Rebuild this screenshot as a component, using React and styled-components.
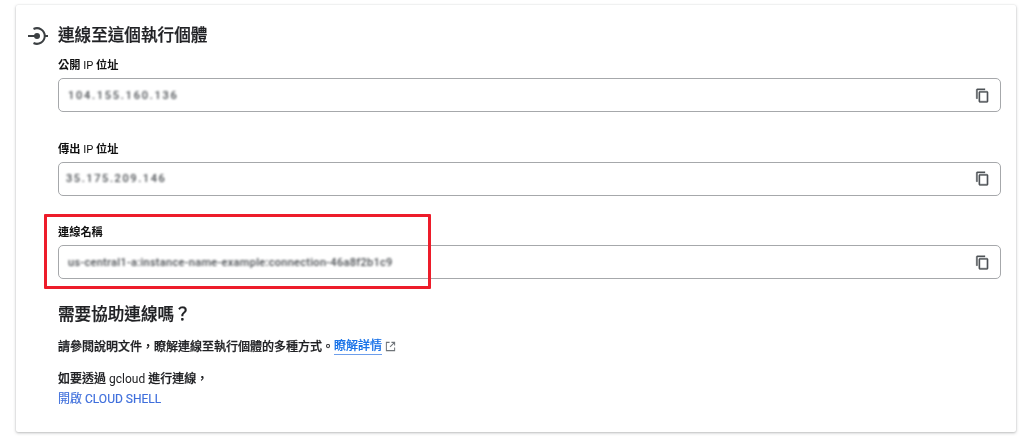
import React from "react";
import styled, { createGlobalStyle } from "styled-components";

const Global = createGlobalStyle`
  html, body { margin: 0; padding: 0; background: #fff; }
  body { font-family: Roboto, "Noto Sans CJK TC", sans-serif; color: #202124; }
`;

const Page = styled.div`
  width: 1024px;
  height: 444px;
  padding: 5px 8px 0 16px;
  box-sizing: border-box;
  overflow: hidden;
  filter: blur(0.35px);
`;

const Card = styled.section`
  position: relative;
  width: 1000px;
  height: 427px;
  box-sizing: border-box;
  background: #fff;
  border-radius: 2px;
  box-shadow: 0 1px 3px rgba(60, 64, 67, 0.35), 0 0 2px rgba(60, 64, 67, 0.1);
  padding: 20px 15px 0 12px;
`;

const Header = styled.header`
  display: flex;
  align-items: center;
  gap: 10px;
  height: 22px;
`;

const Title = styled.h2`
  margin: 0;
  font-size: 16.6px;
  line-height: 22px;
  font-weight: 500;
  -webkit-text-stroke: 0.25px #202124;
`;

const Body = styled.div`
  padding-left: 30px;
`;

const Field = styled.div`
  display: flex;
  flex-direction: column;
  height: 83.5px;
  padding-top: 11px;
  box-sizing: border-box;
`;

const Label = styled.label`
  font-size: 11.2px;
  line-height: 16px;
  font-weight: 700;
  margin-bottom: 4px;
  color: #111;
`;

const InputBox = styled.div`
  display: flex;
  align-items: center;
  justify-content: space-between;
  height: 34px;
  box-sizing: border-box;
  border: 1px solid #a6a8ab;
  border-radius: 5px;
  padding: 0 10px 0 ${(p) => p.$inset}px;
`;

const Blurred = styled.span`
  font-size: 11px;
  font-weight: 500;
  color: #484c50;
  filter: blur(1px);
  white-space: nowrap;
  letter-spacing: ${(p) => p.$spacing}px;
`;

const CopyIcon = styled.svg`
  width: 15px;
  height: 15px;
  fill: #4f5357;
  stroke: #4f5357;
  stroke-width: 0.6;
  flex: none;
`;

const Highlight = styled.div`
  position: absolute;
  left: 28px;
  top: 209px;
  width: 387px;
  height: 75px;
  border: 3px solid #ed1c2a;
  box-sizing: border-box;
  border-radius: 1px;
`;

const HelpTitle = styled.h3`
  margin: 6px 0 0;
  font-size: 16.6px;
  line-height: 22px;
  font-weight: 500;
  -webkit-text-stroke: 0.25px #202124;
`;

const Para = styled.p`
  margin: 12px 0 0;
  font-size: 12px;
  line-height: 18px;
  font-weight: 500;
  display: flex;
  align-items: center;
  -webkit-text-stroke: 0.25px #202124;
`;

const Gcloud = styled.p`
  margin: 14px 0 0;
  font-size: 12px;
  line-height: 18px;
  font-weight: 500;
  -webkit-text-stroke: 0.25px #202124;
`;

const Plain = styled.span`
  font-weight: 400;
  -webkit-text-stroke: 0;
`;

const LearnMore = styled.a`
  color: #1a73e8;
  border-bottom: 1px solid #6d9eeb;
  line-height: 15px;
  -webkit-text-stroke: 0.2px #1a73e8;
`;

const External = styled.svg`
  width: 11px;
  height: 11px;
  margin-left: 3px;
  fill: none;
  stroke: #70757a;
  stroke-width: 1.1;
`;

const ShellLink = styled.a`
  display: block;
  margin-top: 2px;
  font-size: 12px;
  line-height: 18px;
  font-weight: 400;
  color: #3f6fdc;
  -webkit-text-stroke: 0.15px #3f6fdc;
`;

const Copy = () => (
  <CopyIcon viewBox="0 0 24 24">
    <path d="M16 1H4c-1.1 0-2 .9-2 2v14h2V3h12V1zm3 4H8c-1.1 0-2 .9-2 2v14c0 1.1.9 2 2 2h11c1.1 0 2-.9 2-2V7c0-1.1-.9-2-2-2zm0 16H8V7h11v14z" />
  </CopyIcon>
);

const fields = [
  { label: <>公開 <Plain>IP</Plain> 位址</>, value: "104.155.160.136", spacing: 1.75, inset: 9 },
  { label: <>傳出 <Plain>IP</Plain> 位址</>, value: "35.175.209.146", spacing: 1.6, inset: 7 },
  { label: "連線名稱", value: "us-central1-a:instance-name-example:connection-46a8f2b1c9", spacing: 0.3, inset: 9 },
];

export default function App() {
  return (
    <>
      <Global />
      <Page>
        <Card>
          <Header>
            <svg width="20" height="20" viewBox="0 0 20 20" fill="none" stroke="#3c4043" strokeWidth="2">
              <path d="M0 10h8" />
              <circle cx="9" cy="10" r="3" fill="#3c4043" stroke="none" />
              <path d="M5.5 3A7.8 7.8 0 1 1 5.5 17" />
              <path d="M16.5 10H20" />
            </svg>
            <Title>連線至這個執行個體</Title>
          </Header>
          <Body>
            {fields.map((f, i) => (
              <Field key={i}>
                <Label>{f.label}</Label>
                <InputBox $inset={f.inset}>
                  <Blurred $spacing={f.spacing}>{f.value}</Blurred>
                  <Copy />
                </InputBox>
              </Field>
            ))}
            <HelpTitle>需要協助連線嗎？</HelpTitle>
            <Para>
              請參閱說明文件，瞭解連線至執行個體的多種方式。
              <LearnMore>瞭解詳情</LearnMore>
              <External viewBox="0 0 12 12">
                <path d="M5 1.5H1.5v9h9V7M7 1.5h3.5V5M10.5 1.5 5.5 6.5" />
              </External>
            </Para>
            <Gcloud>如要透過 <Plain>gcloud</Plain> 進行連線，</Gcloud>
            <ShellLink>開啟 CLOUD SHELL</ShellLink>
          </Body>
          <Highlight />
        </Card>
      </Page>
    </>
  );
}
